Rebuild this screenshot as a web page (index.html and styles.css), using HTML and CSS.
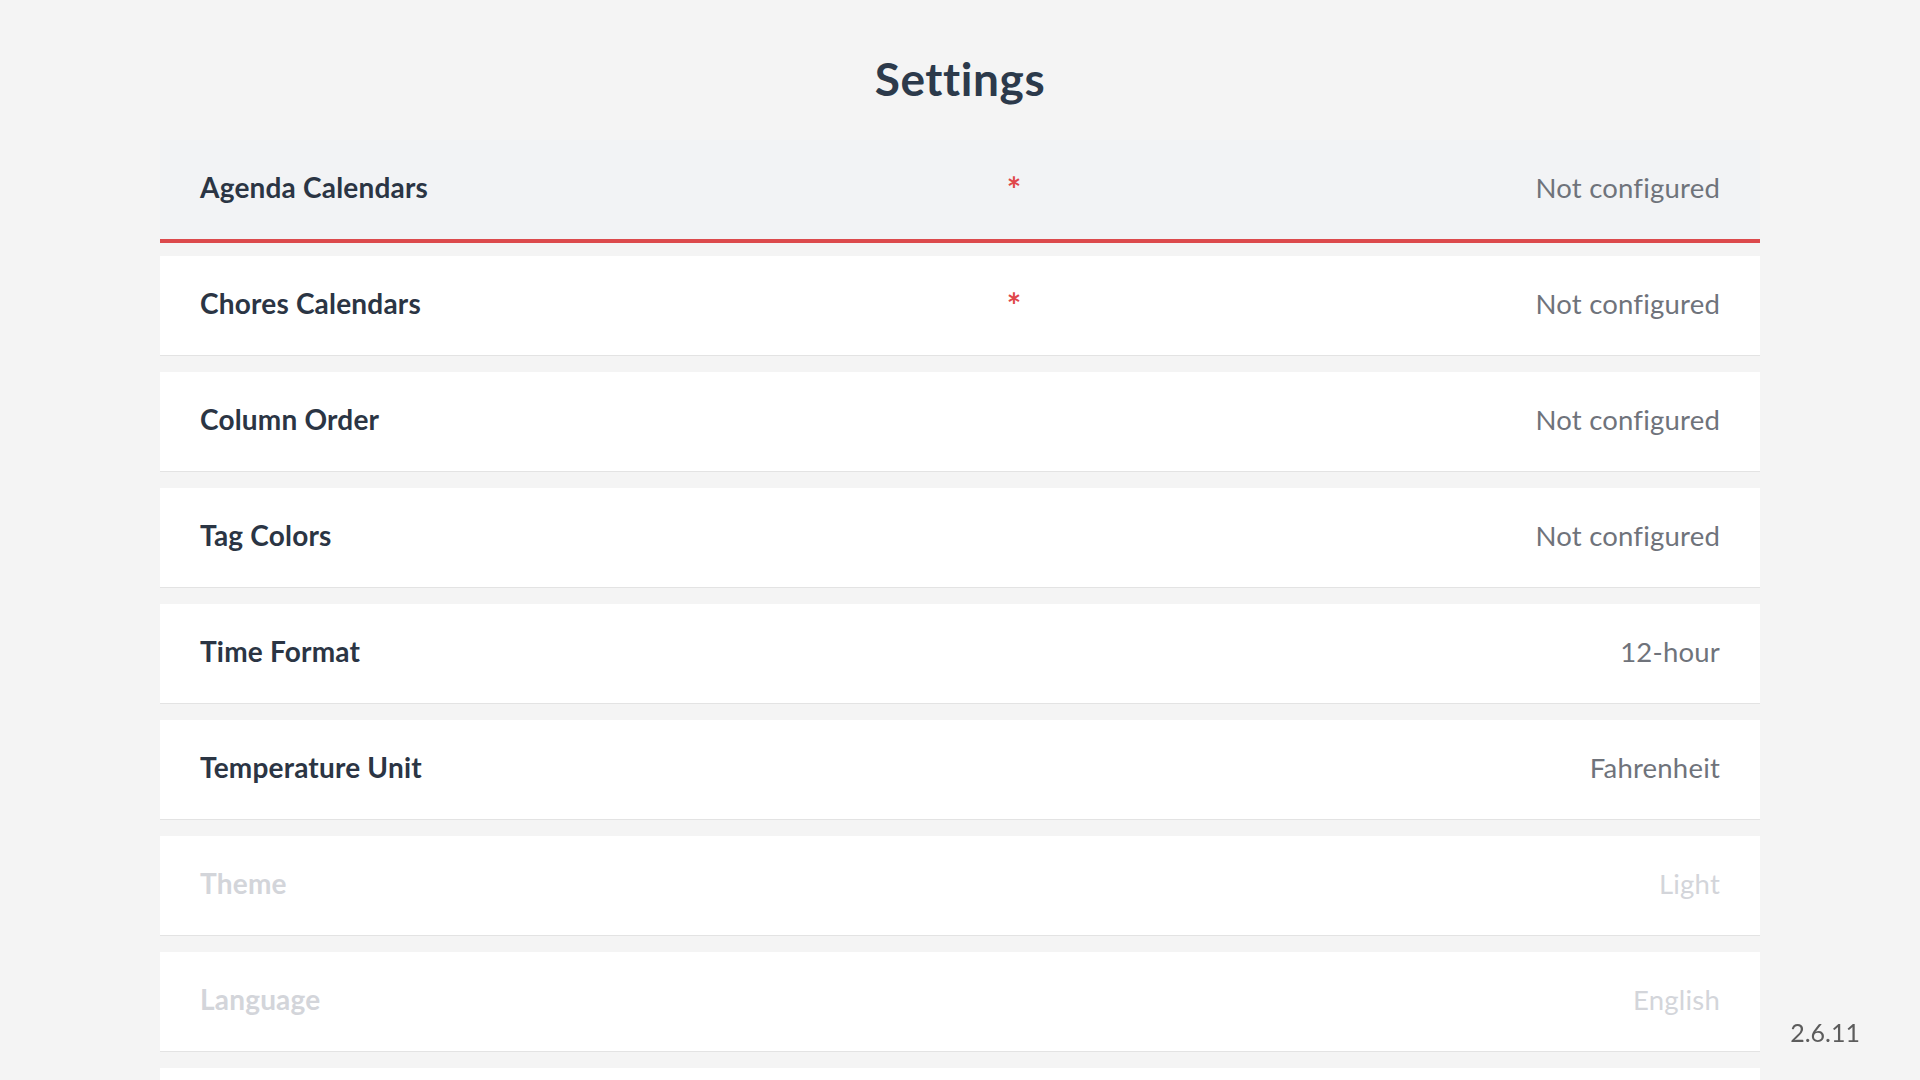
FILE: index.html
```html
<!DOCTYPE html>
<html lang="en">
<head>
  <meta charset="UTF-8" />
  <meta name="viewport" content="width=device-width, initial-scale=1.0" />
  <title>Settings</title>
  <link rel="stylesheet" href="styles.css">
</head>
<body>
  <h1 class="page-title">Settings</h1>

  <div class="settings-list">
    <div class="setting-row focused">
      <span class="setting-label">Agenda Calendars</span>
      <span class="required">*</span>
      <span class="setting-value">Not configured</span>
    </div>

    <div class="setting-row">
      <span class="setting-label">Chores Calendars</span>
      <span class="required">*</span>
      <span class="setting-value">Not configured</span>
    </div>

    <div class="setting-row">
      <span class="setting-label">Column Order</span>
      <span></span>
      <span class="setting-value">Not configured</span>
    </div>

    <div class="setting-row">
      <span class="setting-label">Tag Colors</span>
      <span></span>
      <span class="setting-value">Not configured</span>
    </div>

    <div class="setting-row">
      <span class="setting-label">Time Format</span>
      <span></span>
      <span class="setting-value">12-hour</span>
    </div>

    <div class="setting-row">
      <span class="setting-label">Temperature Unit</span>
      <span></span>
      <span class="setting-value">Fahrenheit</span>
    </div>

    <div class="setting-row disabled">
      <span class="setting-label">Theme</span>
      <span></span>
      <span class="setting-value">Light</span>
    </div>

    <div class="setting-row disabled">
      <span class="setting-label">Language</span>
      <span></span>
      <span class="setting-value">English</span>
    </div>

    <!-- next row only peeks in at the bottom edge -->
    <div class="setting-row disabled"></div>
  </div>

  <div class="version">2.6.11</div>
</body>
</html>
```

FILE: styles.css
```css
* {
  box-sizing: border-box;
}

html, body {
  height: 100%;
  overflow: hidden;
}

body {
  font-family: 'Lato', 'Liberation Sans', sans-serif;
  font-variant-ligatures: none;
  background: #f4f4f4;
  margin: 0;
  padding: 0 160px;
  color: #2b3544;
}

.page-title {
  font-size: 46px;
  font-weight: 700;
  letter-spacing: 0.6px;
  text-align: center;
  color: #2c3a4b;
  margin: 0;
  padding-top: 52px;
  line-height: 54px;
  height: 140px;
}

.settings-list {
  display: flex;
  flex-direction: column;
  gap: 16px;
}

.setting-row {
  display: grid;
  grid-template-columns: 800px 28px 1fr;
  align-items: center;
  height: 100px;
  flex-shrink: 0;
  padding: 0 40px 5px;
  background: #fff;
  border-bottom: 1px solid #e3e3e3;
}

.setting-row.focused {
  background: #f2f3f5;
  border-bottom-color: #dc4a4c;
  box-shadow: 0 3px 0 #dc4a4c; /* thicker focus line */
}

.setting-label {
  font-size: 28px;
  font-weight: 700;
  letter-spacing: 0.2px;
  color: #2b3544;
}

.required {
  color: #e0474a;
  font-size: 34px;
  font-weight: 700;
  text-align: center;
  margin-top: 2px;
}

.setting-value {
  font-size: 27.5px;
  letter-spacing: 0.2px;
  color: #6f737b;
  text-align: right;
}

.disabled .setting-label,
.disabled .setting-value {
  color: #d3d5da;
}

.version {
  position: fixed;
  right: 60px;
  bottom: 33px;
  font-size: 25px;
  color: #5c5c5c;
}
```
